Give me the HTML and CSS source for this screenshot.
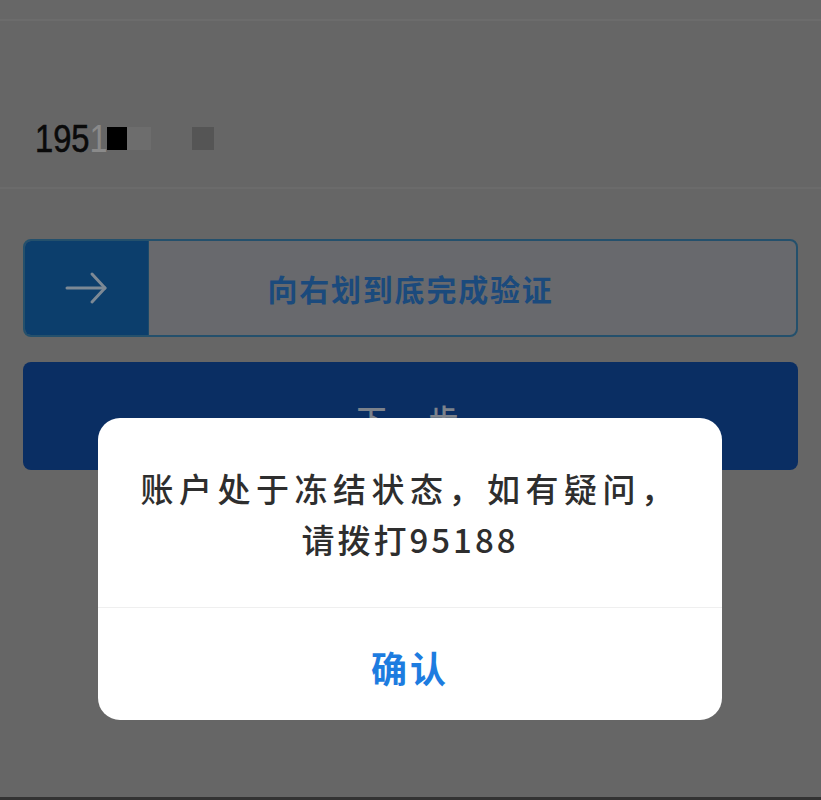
FILE: index.html
```html
<!DOCTYPE html>
<html lang="zh-CN">
<head>
<meta charset="utf-8">
<title>验证</title>
<link rel="stylesheet" href="styles.css">
</head>
<body>
<div class="page">
  <div class="topbar"></div>
  <div class="input-row">
    <span class="phone"><span class="d-dark">195</span><span class="d-faint">1</span></span>
    <span class="mask mask-black"></span>
    <span class="mask mask-faint"></span>
    <span class="mask mask-gray"></span>
  </div>
  <div class="slider">
    <div class="slider-text">向右划到底完成验证</div>
    <div class="knob">
      <svg width="44" height="34" viewBox="0 0 44 34" fill="none" stroke="#7d8995" stroke-width="3" stroke-linecap="round" stroke-linejoin="round">
        <path d="M2 17 H40"/>
        <path d="M27 3 L40 17 L27 31"/>
      </svg>
    </div>
  </div>
  <div class="next-btn">下一步</div>
  <div class="spacer"></div>
  <div class="bottom-bar"></div>
</div>

<div class="dialog">
  <div class="dialog-msg"><span class="msg-line1">账户处于冻结状态，如有疑问，</span><br>请拨打95188</div>
  <div class="dialog-btn">确认</div>
</div>
</body>
</html>
```

FILE: styles.css
```css
html, body {
  margin: 0;
  padding: 0;
}
body {
  background: #666666;
  font-family: "Noto Sans CJK SC", "Noto Sans", sans-serif;
  width: 821px;
  height: 800px;
  overflow: hidden;
}
.page {
  display: flex;
  flex-direction: column;
  height: 800px;
}
.topbar {
  height: 19px;
  background: #676767;
  border-bottom: 2px solid #6c6c6c;
}
.input-row {
  height: 168px;
  display: flex;
  align-items: flex-start;
  padding: 98px 0 0 35px;
  box-sizing: border-box;
  background: #666666;
  border-bottom: 2px solid #6b6b6b;
}
.phone {
  display: inline-block;
  font-family: "Liberation Sans", Arial, sans-serif;
  font-size: 38px;
  line-height: 40px;
  transform: scaleX(0.86);
  transform-origin: left center;
  width: 72px;
  white-space: nowrap;
  -webkit-text-stroke: 0.6px #0a0a0a;
}
.d-dark { color: #0a0a0a; }
.d-faint { color: #8a8a8a; -webkit-text-stroke: 0; }
.mask {
  display: inline-block;
  height: 23px;
  margin-top: 8px;
}
.mask-black {
  width: 20px;
  background: #000;
}
.mask-faint {
  width: 24px;
  background: #6d6d6d;
}
.mask-gray {
  width: 22px;
  margin-left: 41px;
  background: #555555;
}
.slider {
  margin: 50px 23px 0;
  height: 98px;
  box-sizing: border-box;
  border: 2px solid #24506c;
  border-radius: 8px;
  background: #68696d;
  display: grid;
  overflow: hidden;
}
.slider > * {
  grid-area: 1 / 1;
}
.knob {
  width: 123px;
  background: #0c3e6c;
  display: flex;
  align-items: center;
  justify-content: center;
  border-right: 1px solid #1c4a6a;
}
.slider-text {
  display: flex;
  align-items: center;
  justify-content: center;
  font-size: 30px;
  font-weight: 700;
  letter-spacing: 1.8px;
  color: #1b4a7c;
}
.next-btn {
  margin: 25px 23px 0;
  height: 108px;
  border-radius: 8px;
  background: #0a2e63;
  color: #7c828b;
  font-size: 30px;
  font-weight: 500;
  letter-spacing: 6px;
  display: flex;
  align-items: center;
  justify-content: center;
  padding-top: 4px;
  box-sizing: border-box;
}
.spacer {
  flex: 1;
}
.bottom-bar {
  height: 3px;
  background: #333333;
}
.dialog {
  position: absolute;
  left: 98px;
  top: 418px;
  width: 624px;
  height: 302px;
  background: #ffffff;
  border-radius: 22px;
  display: flex;
  flex-direction: column;
  overflow: hidden;
}
.dialog-msg {
  height: 190px;
  box-sizing: border-box;
  padding-top: 45px;
  text-align: center;
  font-size: 33px;
  line-height: 51px;
  font-weight: 500;
  letter-spacing: 3px;
  color: #2e2e2e;
  border-bottom: 1px solid #efefef;
  white-space: nowrap;
}
.msg-line1 {
  letter-spacing: 5.5px;
}
.dialog-btn {
  flex: 1;
  display: flex;
  align-items: center;
  justify-content: center;
  font-size: 36px;
  font-weight: 700;
  letter-spacing: 3px;
  color: #1d7ce0;
  padding-top: 6px;
}
```
